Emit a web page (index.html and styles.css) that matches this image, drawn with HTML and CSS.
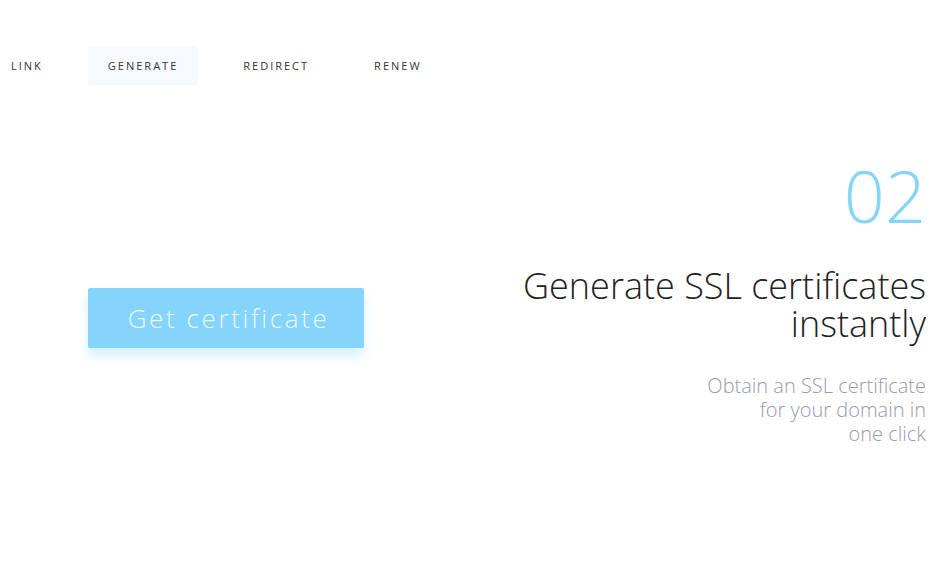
FILE: index.html
```html
<!DOCTYPE html>
<html lang="en">
<head>
<meta charset="UTF-8" />
<meta name="viewport" content="width=device-width, initial-scale=1" />
<title>SSL - Generate</title>
<link rel="stylesheet" href="styles.css">
</head>
<body>

<nav class="tabs">
  <a href="#" class="tab">Link</a>
  <a href="#" class="tab active">Generate</a>
  <a href="#" class="tab">Redirect</a>
  <a href="#" class="tab">Renew</a>
</nav>

<section class="step">
  <div class="step-action">
    <button type="button" class="cert-btn">Get certificate</button>
  </div>
  <div class="step-info">
    <div class="step-num">02</div>
    <h1>Generate SSL certificates instantly</h1>
    <p>Obtain an SSL certificate for your domain in<br>one click</p>
  </div>
</section>

</body>
</html>
```

FILE: styles.css
```css
body {
  margin: 0;
  background: #fff;
  font-family: 'Open Sans', 'Liberation Sans', sans-serif;
  color: #222;
}
.tabs {
  display: flex;
  gap: 25px;
  padding-top: 46px;
  margin-left: -9px;
}
.tab {
  display: block;
  padding: 0 20px;
  height: 39px;
  line-height: 40px;
  font-size: 11px;
  letter-spacing: 2px;
  text-transform: uppercase;
  color: #333;
  text-decoration: none;
  border-radius: 3px;
}
.tab.active {
  background: #f6fafe;
}
.step {
  display: flex;
  padding: 0 14px 0 88px;
}
.step-action {
  flex: 1;
  padding-top: 203px;
}
.cert-btn {
  width: 276px;
  height: 60px;
  padding: 0 0 0 5px;
  border: none;
  border-radius: 2px;
  background: #84d4fc;
  color: rgba(255, 255, 255, 0.85);
  font-family: inherit;
  font-weight: 300;
  font-size: 26px;
  letter-spacing: 2.6px;
  box-shadow: 0 8px 12px rgba(132, 212, 252, 0.35);
  cursor: pointer;
}
.step-info {
  width: 420px;
  text-align: right;
  font-weight: 300;
}
.step-num {
  margin-top: 74px;
  font-size: 72px;
  line-height: 72px;
  color: #84d4fc;
}
.step-info h1 {
  margin: 36px 0 0;
  font-size: 36px;
  line-height: 38px;
  font-weight: 300;
  color: #222;
}
.step-info p {
  width: 225px;
  margin: 31px 0 0 auto;
  font-size: 20px;
  line-height: 24px;
  color: #9a9aab;
}
```
